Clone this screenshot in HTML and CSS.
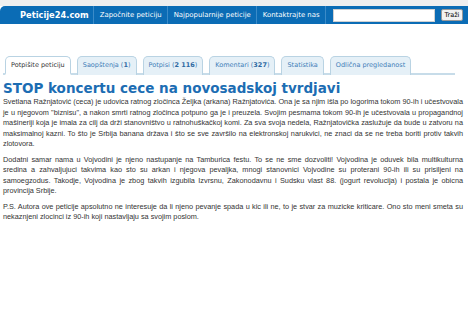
FILE: index.html
```html
<!DOCTYPE html>
<html lang="sr">
<head>
    <meta charset="UTF-8">
    <link rel="stylesheet" href="styles.css">
    <title>STOP koncertu cece na novosadskoj tvrdjavi - Peticije24.com</title>
</head>
<body>

    <div class="top-strip"></div>

    <div class="navbar">
        <a class="logo" href="#">Peticije24.com</a>
        <a class="nav-link" href="#">Započnite peticiju</a>
        <a class="nav-link" href="#">Najpopularnije peticije</a>
        <a class="nav-link" href="#">Kontaktrajte nas</a>
        <form class="search">
            <input type="text" class="search-input">
            <button type="button" class="search-btn">Traži</button>
        </form>
    </div>

    <div class="content">
        <ul class="tabs">
            <li class="tab active">Potpišite peticiju</li>
            <li class="tab">Saopštenja (<b>1</b>)</li>
            <li class="tab">Potpisi (<b>2 116</b>)</li>
            <li class="tab">Komentari (<b>327</b>)</li>
            <li class="tab">Statistika</li>
            <li class="tab">Odlična pregledanost</li>
        </ul>

        <h1 class="petition-title">STOP koncertu cece na novosadskoj tvrdjavi</h1>

        <div class="petition-text">
            <p>Svetlana Ražnjatović (ceca) je udovica ratnog zločinca Željka (arkana) Ražnjatovića. Ona je sa njim išla po logorima tokom 90-ih i učestvovala je u njegovom "biznisu", a nakon smrti ratnog zločinca potpuno ga je i preuzela. Svojim pesmama tokom 90-ih je učestvovala u propagandnoj mašineriji koja je imala za cilj da drži stanovništvo u ratnohuškačkoj komi. Za sva svoja nedela, Ražnjatovička zaslužuje da bude u zatvoru na maksimalnoj kazni. To što je Srbija banana država i što se sve završilo na elektronskoj narukvici, ne znaci da se ne treba boriti protiv takvih zlotovora.</p>
            <p>Dodatni samar nama u Vojvodini je njeno nastupanje na Tamburica festu. To se ne sme dozvoliti! Vojvodina je oduvek bila multikulturna sredina a zahvaljujuci takvima kao sto su arkan i njegova pevaljka, mnogi stanovnici Vojvodine su proterani 90-ih ili su prisiljeni na samoegzodus. Takodje, Vojvodina je zbog takvih izgubila Izvrsnu, Zakonodavnu i Sudsku vlast 88. (jogurt revolucija) i postala je obicna provincija Srbije.</p>
            <p>P.S. Autora ove peticije apsolutno ne interesuje da li njeno pevanje spada u kic ili ne, to je stvar za muzicke kriticare. Ono sto meni smeta su nekaznjeni zlocinci iz 90-ih koji nastavljaju sa svojim poslom.</p>
        </div>
    </div>

</body>
</html>
```

FILE: styles.css
```css
body {
    margin: 0;
    background-color: #fff;
    font-family: 'DejaVu Sans', sans-serif;
    color: #333;
}
.top-strip {
    height: 6px;
    background-color: #efefef;
}
.navbar {
    display: flex;
    align-items: center;
    height: 18px;
    background-color: #0b6cb5;
    border-top-left-radius: 5px;
    white-space: nowrap;
}
.navbar a {
    flex-shrink: 0;
    color: #fff;
    text-decoration: none;
    line-height: 18px;
    border-right: 1px solid #3b8bc8;
}
.logo {
    font-weight: bold;
    font-size: 8.3px;
    padding: 0 4px 0 20px;
}
.nav-link {
    font-size: 6.9px;
    padding: 0 5px 0 6px;
}
.search {
    display: flex;
    align-items: center;
    gap: 6px;
    margin-left: 7px;
}
.search-input {
    width: 102px;
    height: 13px;
    padding: 0;
    border: 1px solid #d0d0d0;
    box-sizing: border-box;
}
.search-btn {
    font-family: 'DejaVu Sans', sans-serif;
    font-size: 6.5px;
    height: 12px;
    padding: 0 3px;
    border: 1px solid #999;
    border-radius: 2px;
    background-color: #f2f2f2;
    color: #000;
}
.content {
    padding: 32px 3px 0 3px;
}
.tabs {
    list-style: none;
    display: flex;
    gap: 6px;
    margin: 0 10px 0 0;
    padding: 0 0 0 2px;
    border-bottom: 2px solid #c7dce9;
}
.tab {
    font-size: 6.5px;
    color: #3f7db7;
    background-color: #e5f0f7;
    border: 1px solid #b9d3e3;
    border-bottom: none;
    border-radius: 5px 5px 0 0;
    padding: 4px 5px;
    margin-bottom: -2px;
}
.tab b {
    color: #2f6aa3;
}
.tab.active {
    background-color: #fff;
    color: #333;
    border-bottom: 2px solid #fff;
}
.petition-title {
    font-size: 13.5px;
    line-height: 15px;
    color: #1c6db3;
    margin: 6px 0 1px 0;
}
.petition-text {
    padding-right: 2px;
}
.petition-text p {
    font-family: 'Liberation Sans', sans-serif;
    font-size: 7.3px;
    line-height: 10.5px;
    text-align: justify;
    margin: 0 0 5px 0;
}
```
